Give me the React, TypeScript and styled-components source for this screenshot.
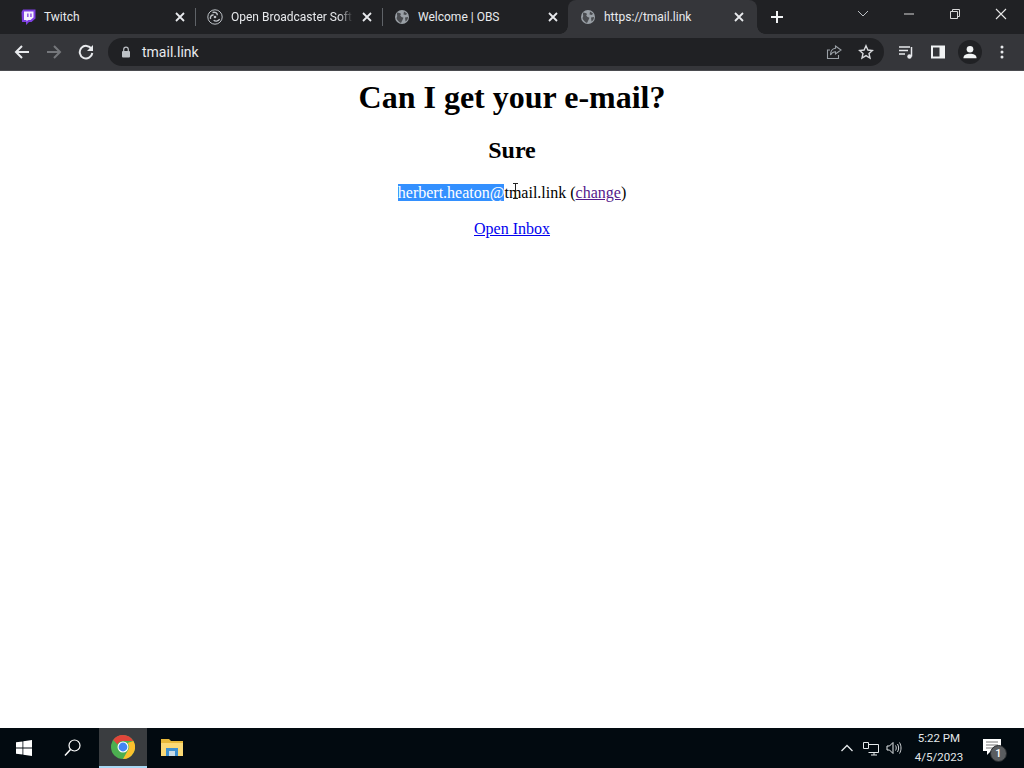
import React from "react";
import styled, { createGlobalStyle } from "styled-components";

const Global = createGlobalStyle`
  html, body { margin: 0; padding: 0; height: 100%; overflow: hidden; background: #fff; }
  #root { height: 100%; }
`;

const Screen = styled.div`
  width: 1024px; height: 768px; display: flex; flex-direction: column; overflow: hidden;
  font-family: Roboto, "Noto Sans", sans-serif;
`;
const TabStrip = styled.div`
  height: 34px; background: #202124; display: flex; align-items: stretch; flex: none; position: relative;
`;
const Tab = styled.div<{ $w: number; $pl: number; $pr: number; $active?: boolean }>`
  width: ${(p) => p.$w}px; flex: none; display: flex; align-items: center; position: relative;
  padding: 0 ${(p) => p.$pr}px 0 ${(p) => p.$pl}px; box-sizing: border-box;
  color: #e8eaed; font-size: 12px;
  background: ${(p) => (p.$active ? "#35363a" : "transparent")};
  border-radius: ${(p) => (p.$active ? "8px 8px 0 0" : "0")};
  ${(p) =>
    p.$active
      ? `
    &::before, &::after { content: ""; position: absolute; bottom: 0; width: 8px; height: 8px; }
    &::before { left: -8px; background: radial-gradient(circle at 0 0, #202124 7.5px, #35363a 8px); }
    &::after { right: -8px; background: radial-gradient(circle at 100% 0, #202124 7.5px, #35363a 8px); }
  `
      : ""}
`;
const Fav = styled.span`
  width: 16px; height: 16px; flex: none; margin-right: 8px; display: flex;
`;
const TabTitle = styled.span<{ $fade?: boolean }>`
  flex: 1; white-space: nowrap; min-width: 0;
  ${(p) =>
    p.$fade
      ? "mask-image: linear-gradient(to right, #000 88%, transparent 100%); -webkit-mask-image: linear-gradient(to right, #000 88%, transparent 100%);"
      : ""}
`;
const TabClose = styled.span`
  width: 10px; height: 10px; flex: none; margin-left: 9px; display: flex;
`;
const Divider = styled.span`
  width: 1px; height: 18px; background: #5f6368; flex: none; align-self: center;
`;
const NewTab = styled.span`
  width: 14px; height: 14px; margin: 10px 0 0 13px; display: flex; flex: none;
`;
const WindowControls = styled.div`
  margin-left: auto; display: flex; align-items: flex-start; padding-top: 8px;
`;
const WinBtn = styled.span<{ $w: number }>`
  width: ${(p) => p.$w}px; height: 12px; display: flex; justify-content: center; align-items: center;
`;
const Toolbar = styled.div`
  height: 37px; background: #35363a; display: flex; align-items: center; flex: none;
  box-sizing: border-box; padding: 0 0 1px 14px; border-bottom: 1px solid #4a4b4f;
`;
const NavIcon = styled.span<{ $mr: number }>`
  width: 16px; height: 16px; display: flex; flex: none; margin-right: ${(p) => p.$mr}px;
`;
const Omnibox = styled.div`
  width: 776px; height: 28px; border-radius: 14px; background: #202124; display: flex; align-items: center;
  margin-left: 14px; padding-left: 12px; box-sizing: border-box; color: #e8eaed; font-size: 14px; flex: none;
`;
const Lock = styled.span`
  width: 12px; height: 12px; display: flex; margin-right: 10px;
`;
const Url = styled.span`
  flex: 1;
`;
const OmniIcon = styled.span<{ $mr: number }>`
  width: 16px; height: 16px; display: flex; margin-right: ${(p) => p.$mr}px; flex: none;
`;
const ToolIcon = styled.span<{ $ml: number }>`
  width: 16px; height: 16px; display: flex; margin-left: ${(p) => p.$ml}px; flex: none;
`;
const ProfileIcon = styled.span`
  width: 24px; height: 24px; border-radius: 50%; background: #202124; display: flex; align-items: center;
  justify-content: center; margin-left: 12px; flex: none;
`;
const Page = styled.main`
  flex: 1; background: #fff; color: #000; text-align: center; position: relative;
  font-family: "Liberation Serif", "Times New Roman", serif; font-size: 16px; padding-top: 8px;
`;
const Title = styled.h1`
  font-size: 32px; margin: 0 0 21.44px; line-height: 37px;
`;
const Sub = styled.h2`
  font-size: 24px; margin: 0 0 20px; line-height: 27px;
`;
const Line = styled.p`
  margin: 0 0 18px; line-height: 18px;
`;
const Selected = styled.span`
  background: #3390ff; color: #fff;
`;
const Visited = styled.a`
  color: #551a8b; text-decoration: underline;
`;
const Unvisited = styled.a`
  color: #0000ee; text-decoration: underline;
`;
const Caret = styled.svg`
  position: absolute; left: 512px; top: 112px;
`;
const Taskbar = styled.div`
  height: 40px; background: #020a10; display: flex; align-items: stretch; flex: none; color: #fff;
`;
const TaskCell = styled.div<{ $w: number; $pr?: number; $active?: boolean }>`
  width: ${(p) => p.$w}px; flex: none; display: flex; align-items: center; justify-content: center;
  box-sizing: border-box; padding-right: ${(p) => p.$pr ?? 0}px;
  background: ${(p) => (p.$active ? "#3a3d40" : "transparent")};
  border-bottom: ${(p) => (p.$active ? "2px solid #a8d8f4" : "none")};
`;
const Tray = styled.div`
  margin-left: auto; display: flex; align-items: center;
`;
const TrayIcon = styled.span<{ $mr: number }>`
  width: 16px; height: 16px; display: flex; flex: none; margin-right: ${(p) => p.$mr}px;
`;
const Clock = styled.div`
  width: 62px; flex: none; text-align: center; font-size: 11.5px; line-height: 19px; color: #e4e8ea;
  margin-right: 13px;
`;
const Notify = styled.div`
  width: 24px; height: 18px; position: relative; margin-right: 17px; flex: none;
`;
const Badge = styled.span`
  position: absolute; right: 0; bottom: -5px; width: 17px; height: 17px; border-radius: 50%;
  background: #5a5d60; border: 1px solid #26292c; box-sizing: border-box; color: #fff; font-size: 11px;
  display: flex; align-items: center; justify-content: center; font-weight: 500;
`;

const X = ({ c = "#e8eaed", w = 1.8 }: { c?: string; w?: number }) => (
  <svg width="100%" height="100%" viewBox="0 0 10 10"><path d="M1 1l8 8M9 1l-8 8" stroke={c} strokeWidth={w} /></svg>
);
const Globe = () => (
  <svg width="16" height="16" viewBox="0 0 16 16">
    <circle cx="8" cy="8" r="7" fill="#9aa0a6" />
    <path d="M3 3.500c2 .2 3 .5 4 1.500l-.8 1.500L7.500 8l2 .7L8 12l-1 2C5 13 3.200 11.500 2.500 9 3 8 3.500 7 3 6Z" fill="#4a4c50" />
    <path d="M10 2.500l3 2-1 1.600-2.500-.5ZM11 8.500l3-.5c0 2-1 3.500-2.500 4.500Z" fill="#4a4c50" />
  </svg>
);

export default function App() {
  return (
    <Screen>
      <Global />
      <TabStrip>
        <Tab $w={195} $pl={20} $pr={10}>
          <Fav>
            <svg width="16" height="16" viewBox="0 0 16 16">
              <path d="M3 .5H15.500V9.500L11.500 13H9L6 16V13H2L1.500 3Z" fill="#7d3fe0" />
              <path d="M4 2.500H13.500V8.500L10.500 11H8L6.500 12.500V11H4Z" fill="#f4f0ff" />
              <path d="M7.200 4.500h1.300v3.500H7.200ZM10.300 4.500h1.300v3.500h-1.300Z" fill="#7d3fe0" />
            </svg>
          </Fav>
          <TabTitle>Twitch</TabTitle>
          <TabClose><X /></TabClose>
        </Tab>
        <Divider />
        <Tab $w={186} $pl={11} $pr={10}>
          <Fav>
            <svg width="16" height="16" viewBox="0 0 16 16" fill="none" stroke="#bdc1c6">
              <circle cx="8" cy="8" r="7.200" />
              <circle cx="8" cy="8" r="1.300" fill="#bdc1c6" stroke="none" />
              <path d="M5.500 3.500C8 2.600 10.500 4 10.300 6.300M12.700 10.200c-1.500 2.200-4.600 2.500-6 .9M3.600 10C2.800 7.600 4.500 5.600 6.600 6" strokeWidth="1.400" />
            </svg>
          </Fav>
          <TabTitle $fade>Open Broadcaster Soft</TabTitle>
          <TabClose><X /></TabClose>
        </Tab>
        <Divider />
        <Tab $w={185} $pl={11} $pr={10}>
          <Fav><Globe /></Fav>
          <TabTitle>Welcome | OBS</TabTitle>
          <TabClose><X /></TabClose>
        </Tab>
        <Tab $w={189} $pl={12} $pr={13} $active>
          <Fav><Globe /></Fav>
          <TabTitle>https://tmail.link</TabTitle>
          <TabClose><X /></TabClose>
        </Tab>
        <NewTab>
          <svg width="14" height="14" viewBox="0 0 14 14"><path d="M7 1v12M1 7h12" stroke="#f1f3f4" strokeWidth="2" /></svg>
        </NewTab>
        <WindowControls>
          <WinBtn $w={46}>
            <svg width="12" height="8" viewBox="0 0 12 8" fill="none"><path d="M1 1l5 5 5-5" stroke="#bdc1c6" /></svg>
          </WinBtn>
          <WinBtn $w={46}>
            <svg width="10" height="2" viewBox="0 0 10 2"><path d="M0 1h10" stroke="#d8d8d8" /></svg>
          </WinBtn>
          <WinBtn $w={46}>
            <svg width="10" height="10" viewBox="0 0 10 10" fill="none" stroke="#d8d8d8"><path d="M.5 2.500h7v7h-7ZM2.500 2.500v-2h7v7h-2" /></svg>
          </WinBtn>
          <WinBtn $w={46}>
            <svg width="12" height="12" viewBox="0 0 12 12"><path d="M1 1l10 10M11 1L1 11" stroke="#e8e8e8" strokeWidth="1.100" /></svg>
          </WinBtn>
        </WindowControls>
      </TabStrip>
      <Toolbar>
        <NavIcon $mr={16}>
          <svg width="16" height="16" viewBox="0 0 16 16" fill="none"><path d="M15 8H2M8 2L2 8l6 6" stroke="#e8eaed" strokeWidth="2" /></svg>
        </NavIcon>
        <NavIcon $mr={16}>
          <svg width="16" height="16" viewBox="0 0 16 16" fill="none"><path d="M1 8h13M8 2l6 6-6 6" stroke="#75777b" strokeWidth="2" /></svg>
        </NavIcon>
        <NavIcon $mr={0}>
          <svg width="16" height="16" viewBox="0 0 16 16" fill="none">
            <path d="M13.500 5A6.300 6.300 0 1 0 14.300 9" stroke="#e8eaed" strokeWidth="2" />
            <path d="M15 1v6H9Z" fill="#e8eaed" />
          </svg>
        </NavIcon>
        <Omnibox>
          <Lock>
            <svg width="12" height="12" viewBox="0 0 12 12">
              <rect x="2" y="5" width="8" height="6.500" rx="1" fill="#bdc1c6" />
              <path d="M3.700 5V3.500a2.300 2.300 0 0 1 4.600 0V5" fill="none" stroke="#bdc1c6" strokeWidth="1.200" />
            </svg>
          </Lock>
          <Url>tmail.link</Url>
          <OmniIcon $mr={16}>
            <svg width="16" height="16" viewBox="0 0 16 16" fill="none" stroke="#9aa0a6" strokeWidth="1.100">
              <path d="M4 6H1.500v8.500h11V11" />
              <path d="M9.500 2l5.500 4-5.500 4V7.800C7 7.800 5.500 9 4.500 11c0-4 2-6.400 5-6.800Z" />
            </svg>
          </OmniIcon>
          <OmniIcon $mr={10}>
            <svg width="16" height="16" viewBox="0 0 16 16" fill="none"><path d="M8 1.800l1.900 4.200 4.500.5-3.400 3 1 4.500L8 11.600 4 14l1-4.500-3.400-3 4.500-.5Z" stroke="#d8dadd" strokeWidth="1.400" /></svg>
          </OmniIcon>
        </Omnibox>
        <ToolIcon $ml={14}>
          <svg width="16" height="16" viewBox="0 0 16 16" fill="none">
            <path d="M1 3h11M1 6.500h9M1 10h6" stroke="#e8eaed" strokeWidth="1.300" />
            <path d="M13.500 3v9.500" stroke="#e8eaed" strokeWidth="1.500" />
            <circle cx="11.500" cy="12.500" r="2.200" fill="#e8eaed" />
          </svg>
        </ToolIcon>
        <ToolIcon $ml={16}>
          <svg width="16" height="16" viewBox="0 0 16 16"><path d="M1 1.500h14v13H1Z" fill="#f1f3f4" /><path d="M3 3.500h6.500v9H3Z" fill="#35363a" /></svg>
        </ToolIcon>
        <ProfileIcon>
          <svg width="14" height="14" viewBox="0 0 16 16" fill="#f1f3f4">
            <circle cx="8" cy="4.800" r="3.800" />
            <path d="M.5 15c0-3.800 3.500-5 7.500-5s7.500 1.200 7.500 5Z" />
          </svg>
        </ProfileIcon>
        <ToolIcon $ml={12}>
          <svg width="16" height="16" viewBox="0 0 16 16" fill="#e8eaed">
            <circle cx="8" cy="3" r="1.500" /><circle cx="8" cy="8" r="1.500" /><circle cx="8" cy="13" r="1.500" />
          </svg>
        </ToolIcon>
      </Toolbar>
      <Page>
        <Title>Can I get your e-mail?</Title>
        <Sub>Sure</Sub>
        <Line>
          <Selected>herbert.heaton@</Selected>tmail.link (<Visited href="#">change</Visited>)
        </Line>
        <Line>
          <Unvisited href="#">Open Inbox</Unvisited>
        </Line>
        <Caret width="7" height="16" viewBox="0 0 7 16" fill="none">
          <path d="M1 .5h5M3.500.5v15M1 15.500h5" stroke="#222" />
        </Caret>
      </Page>
      <Taskbar>
        <TaskCell $w={48}>
          <svg width="16" height="16" viewBox="0 0 16 16" fill="#fff">
            <path d="M0 2.300l6.500-.9v6.200H0ZM7.300 1.300L16 0v7.600H7.300ZM0 8.400h6.500v6.200L0 13.700ZM7.300 8.400H16V16l-8.700-1.300Z" />
          </svg>
        </TaskCell>
        <TaskCell $w={51} $pr={2}>
          <svg width="17" height="18" viewBox="0 0 17 18" fill="none" stroke="#fff" strokeWidth="1.200">
            <circle cx="10.500" cy="6.500" r="5.500" /><path d="M6.500 10.500L1 16.500" strokeWidth="1.500" />
          </svg>
        </TaskCell>
        <TaskCell $w={48} $active>
          <svg width="24" height="24" viewBox="0 0 24 24">
            <circle cx="12" cy="12" r="12" fill="#4caf50" />
            <path d="M12 0a12 12 0 0 1 10.400 6H12a6 6 0 0 0-5.500 3.500L2.200 5A12 12 0 0 1 12 0Z" fill="#e0453a" />
            <path d="M22.400 6A12 12 0 0 1 12 24l4.800-8.500A6 6 0 0 0 16.500 8Z" fill="#fbc02d" />
            <circle cx="12" cy="12" r="5.500" fill="#fff" />
            <circle cx="12" cy="12" r="4.400" fill="#4285f4" />
          </svg>
        </TaskCell>
        <TaskCell $w={50}>
          <svg width="22" height="20" viewBox="0 0 22 20">
            <path d="M0 1h8l2 2h12v15H0Z" fill="#e8b93a" />
            <path d="M0 5h22v13H0Z" fill="#fbd975" />
            <path d="M5 10h12v8h-3v-5H8v5H5Z" fill="#3d8fd0" />
            <path d="M8 13h6v5H8Z" fill="#c9dbe6" />
          </svg>
        </TaskCell>
        <Tray>
          <TrayIcon $mr={8}>
            <svg width="16" height="16" viewBox="0 0 16 16" fill="none"><path d="M2.500 11L8 5.500l5.500 5.500" stroke="#e4e8ea" strokeWidth="1.300" /></svg>
          </TrayIcon>
          <TrayIcon $mr={7}>
            <svg width="16" height="16" viewBox="0 0 16 16" fill="none" stroke="#e4e8ea">
              <path d="M.5 2.500h5v6h-5ZM5.500 4.500h10v8h-10M8 15h6M11 12.500V15" />
            </svg>
          </TrayIcon>
          <TrayIcon $mr={6}>
            <svg width="16" height="16" viewBox="0 0 16 16" fill="none" stroke="#e4e8ea">
              <path d="M1 6v4h2.500L7 13.500v-11L3.500 6Z" />
              <path d="M9.500 5.500c1 1.500 1 3.500 0 5M11.500 4c1.500 2.500 1.500 5.500 0 8M13.500 2.500c2 3.300 2 7.700 0 11" strokeWidth=".9" />
            </svg>
          </TrayIcon>
          <Clock>
            <div>5:22 PM</div>
            <div>4/5/2023</div>
          </Clock>
          <Notify>
            <svg width="18" height="16" viewBox="0 0 18 16" fill="#fff">
              <path d="M0 0h18v12H8l-4 4v-4H0Z" />
              <path d="M3 3h12M3 6h12M3 9h8" stroke="#555" strokeWidth=".8" />
            </svg>
            <Badge>1</Badge>
          </Notify>
        </Tray>
      </Taskbar>
    </Screen>
  );
}
